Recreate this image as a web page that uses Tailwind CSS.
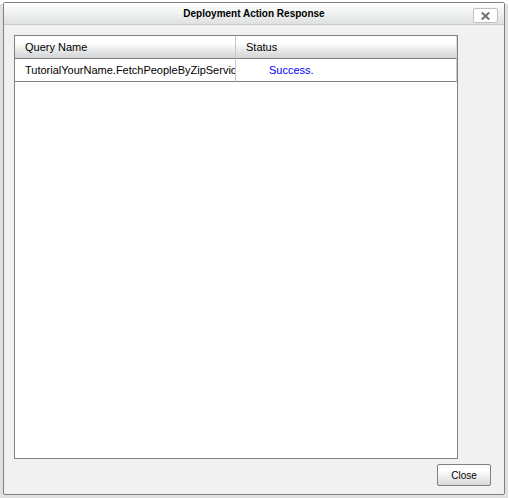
<!DOCTYPE html>
<html lang="en">
<head>
<meta charset="utf-8">
<title>Deployment Action Response</title>
<script src="https://cdn.jsdelivr.net/npm/@tailwindcss/browser@4"></script>
</head>
<body class="bg-white font-['Liberation_Sans',Arial,sans-serif] text-black">
<div class="flex h-screen flex-col pt-1 pr-px">
  <div class="flex min-h-0 flex-1 flex-col bg-[#e0e0e0] px-[3px] pb-[3px]">
    <section role="dialog" aria-labelledby="title" class="-mt-[2px] flex min-h-0 flex-1 flex-col rounded-[2px] border border-[#808080] bg-[#f1f1f1]">
      <header class="grid h-[22px] shrink-0 grid-cols-[1fr_auto_1fr] items-center border-b border-[#c8c8c8] bg-linear-to-b from-white to-[#dfe1e1] px-[6px]">
        <h1 id="title" class="col-start-2 text-[10px] leading-[14px] font-bold">Deployment Action Response</h1>
        <button type="button" aria-label="Close dialog" class="mt-[3px] flex h-[15px] w-[25px] items-center justify-center justify-self-end rounded-[2px] border border-[#c0c0c0] bg-white pt-px">
          <svg class="h-2 w-[9px]" viewBox="0 0 9 8" fill="none" stroke="#707070" stroke-width="2"><path d="M.8 .5 8.2 7.5M8.2 .5.8 7.5"/></svg>
        </button>
      </header>
      <div class="mt-[10px] mr-[46px] ml-[10px] min-h-0 flex-1 overflow-hidden border border-[#808080] bg-white">
        <table class="w-full table-fixed border-separate border-spacing-0 text-left text-[11px] leading-[14px]">
          <thead>
            <tr class="h-[23px] bg-linear-to-b from-white from-30% to-[#cfd0d2]">
              <th scope="col" class="w-[221px] border-r border-b border-r-[#c8c8c8] border-b-[#808080] p-0 pl-[10px] font-normal">Query Name</th>
              <th scope="col" class="border-r border-b border-r-[#d8d8d8] border-b-[#808080] p-0 pl-[10px] font-normal">Status</th>
            </tr>
          </thead>
          <tbody>
            <tr class="h-[23px]">
              <td class="overflow-hidden border-r border-b border-r-[#c8c8c8] border-b-[#808080] p-0 pl-[10px] whitespace-nowrap">TutorialYourName.FetchPeopleByZipService</td>
              <td class="border-r border-b border-r-[#c8c8c8] border-b-[#808080] p-0 pl-[33px] text-[#0000ff]">Success.</td>
            </tr>
          </tbody>
        </table>
      </div>
      <footer class="flex shrink-0 justify-end pt-[5px] pr-[13px] pb-2">
        <button type="button" class="h-[22px] w-[54px] rounded-[2px] border border-[#808080] bg-linear-to-b from-white from-30% to-[#d8d8d8] pt-[2px] text-[10px] leading-[14px]">Close</button>
      </footer>
    </section>
  </div>
</div>
</body>
</html>
